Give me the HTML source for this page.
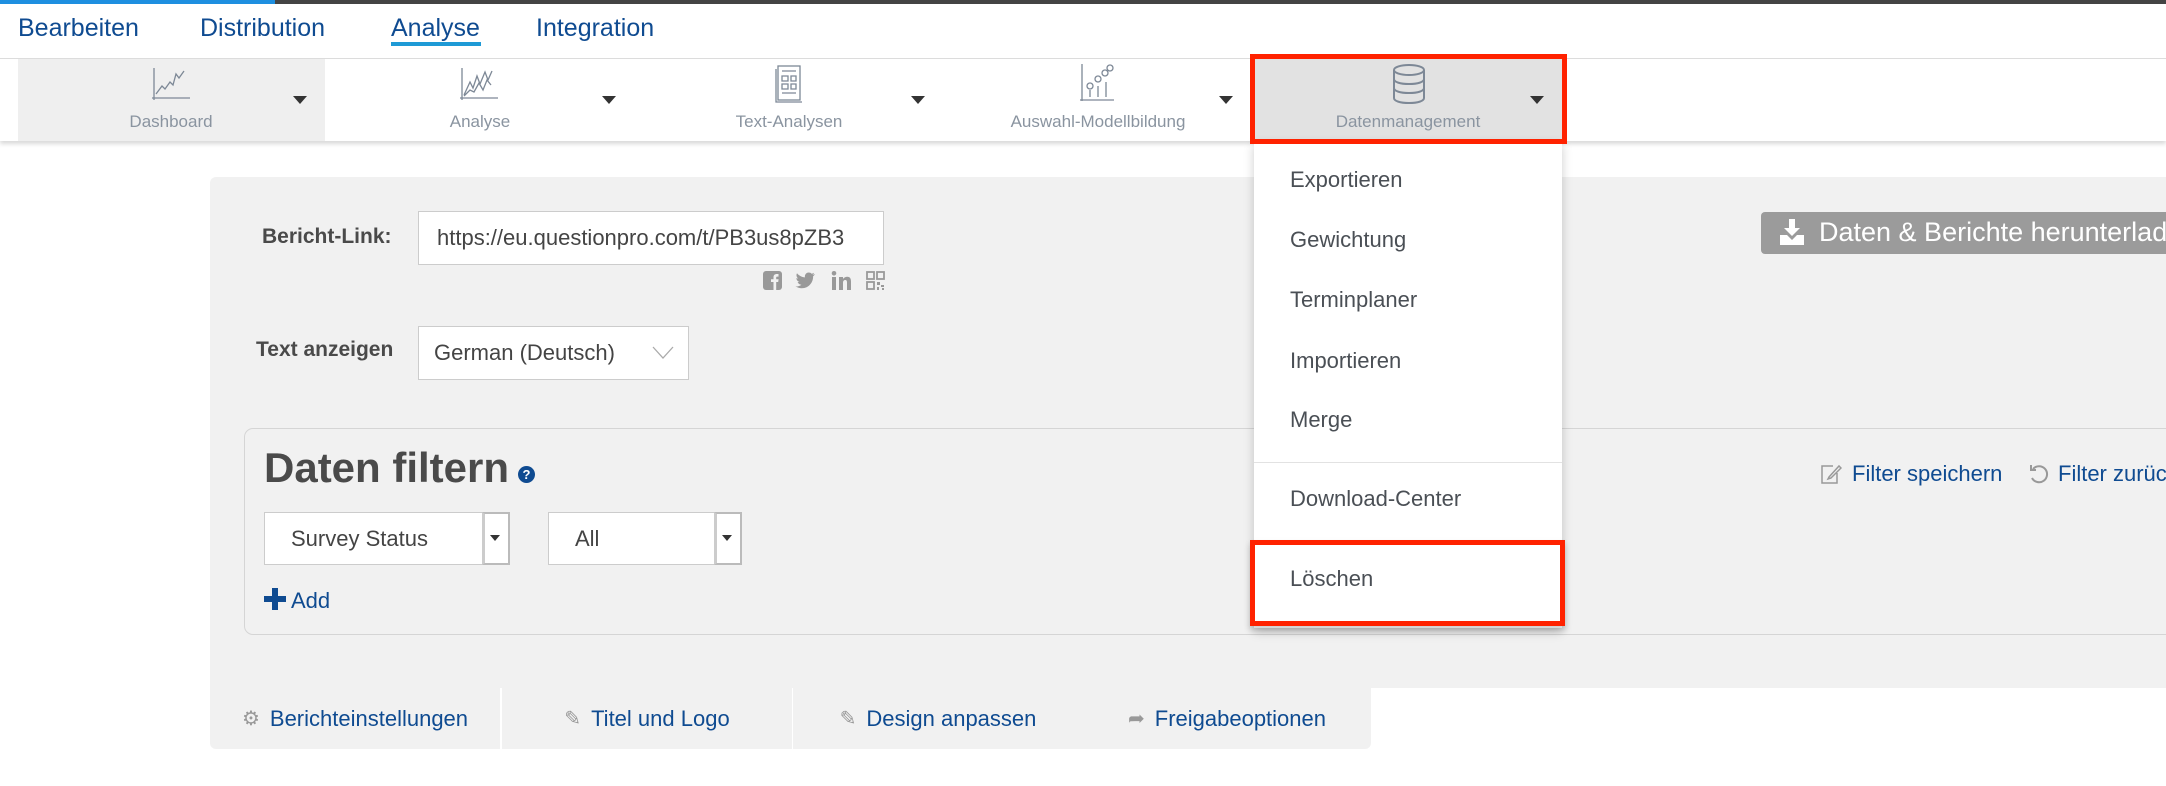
<!DOCTYPE html>
<html><head><meta charset="utf-8"><style>
*{box-sizing:border-box;margin:0;padding:0}
body{width:2166px;height:786px;overflow:hidden;background:#fff;font-family:"Liberation Sans Narrow","Liberation Sans",sans-serif;position:relative;color:#4a4f55}
.a{position:absolute;white-space:nowrap}
.tab{font-size:25px;color:#0f4b91;top:14px}
.tl{font-size:17px;color:#8a94a0;top:112px;transform:translateX(-50%)}
.arr{width:0;height:0;border-left:7px solid transparent;border-right:7px solid transparent;border-top:8px solid #333;top:96px}
.dd{font-size:22px;color:#4a4f55;left:1290px}
.blue{color:#0f4b91}
.red{border:5px solid #ff2200}
.btab{top:688px;height:61px;width:290px;background:#f1f1f1;font-size:22px;color:#0f4b91;display:flex;align-items:center;justify-content:center;gap:10px}
</style></head><body>
<div class="a" style="left:0;top:0;width:2166px;height:4px;background:#444"></div>
<div class="a" style="left:0;top:0;width:275px;height:4px;background:#1e8fe0"></div>
<div class="a tab" style="left:18px">Bearbeiten</div>
<div class="a tab" style="left:200px">Distribution</div>
<div class="a tab" style="left:391px">Analyse</div>
<div class="a" style="left:391px;top:42px;width:90px;height:4px;background:#1e9ad6"></div>
<div class="a tab" style="left:536px">Integration</div>
<div class="a" style="left:0;top:58px;width:2166px;height:1px;background:#ddd"></div>
<div class="a" style="left:0;top:59px;width:2166px;height:82px;background:#fff;box-shadow:0 3px 4px rgba(0,0,0,.15)"></div>
<div class="a" style="left:18px;top:59px;width:307px;height:82px;background:#efefef"></div>
<div class="a" style="left:1254px;top:59px;width:311px;height:82px;background:#e2e2e2"></div>
<svg class="a" style="left:152px;top:68px" width="40" height="34" viewBox="0 0 40 34" fill="none" stroke="#7d8896" stroke-width="1.3"><path d="M2 0V32M0 30H38M4 26L10 18L13 21L18 14L21 17L24 6L27 10L32 3"/></svg>
<svg class="a" style="left:460px;top:68px" width="40" height="34" viewBox="0 0 40 34" fill="none" stroke="#7d8896" stroke-width="1.3"><path d="M2 0V32M0 30H38M4 27L10 14L13 20L17 8L20 16L25 4L28 12L32 3M4 28L10 22L14 24L19 15L23 22L27 12L31 17"/></svg>
<svg class="a" style="left:773px;top:64px" width="34" height="40" viewBox="0 0 34 40" fill="none" stroke="#7d8896" stroke-width="1.3"><rect x="5" y="2" width="22" height="34"/><path d="M3 5V38H29M9 7H23M9 12H15V17H9ZM18 12H23V17H18ZM9 20H15V25H9ZM18 20H23V25H18ZM9 29H23"/></svg>
<svg class="a" style="left:1080px;top:64px" width="36" height="40" viewBox="0 0 36 40" fill="none" stroke="#7d8896" stroke-width="1.3"><path d="M2 0V37M0 36H34M10 33V26M18 33V22M26 33V18"/><circle cx="10" cy="22" r="3"/><circle cx="18" cy="15" r="3"/><circle cx="25" cy="9" r="3"/><circle cx="30" cy="4" r="3"/></svg>
<svg class="a" style="left:1391px;top:63px" width="36" height="42" viewBox="0 0 36 42" fill="none" stroke="#7d8896" stroke-width="2"><ellipse cx="18" cy="7" rx="15" ry="5"/><path d="M3 7V35C3 38 9 40 18 40C27 40 33 38 33 35V7M3 16C3 19 9 21 18 21C27 21 33 19 33 16M3 25C3 28 9 30 18 30C27 30 33 28 33 25"/></svg>
<div class="a tl" style="left:171px">Dashboard</div>
<div class="a tl" style="left:480px">Analyse</div>
<div class="a tl" style="left:789px">Text-Analysen</div>
<div class="a tl" style="left:1098px">Auswahl-Modellbildung</div>
<div class="a tl" style="left:1408px">Datenmanagement</div>
<div class="a arr" style="left:293px"></div>
<div class="a arr" style="left:602px"></div>
<div class="a arr" style="left:911px"></div>
<div class="a arr" style="left:1219px"></div>
<div class="a arr" style="left:1530px"></div>
<div class="a" style="left:210px;top:177px;width:1970px;height:511px;background:#f1f1f1;border-radius:6px 0 0 0"></div>
<div class="a" style="left:262px;top:225px;font-size:21px;font-weight:bold;color:#4a4a4a">Bericht-Link:</div>
<div class="a" style="left:418px;top:211px;width:466px;height:54px;background:#fff;border:1px solid #ccc;font-size:22px;padding:13px 18px;overflow:hidden;color:#444">https://eu.questionpro.com/t/PB3us8pZB3</div>
<svg class="a" style="left:763px;top:271px" width="122" height="19" viewBox="0 0 122 19">
<rect x="0" y="0" width="19" height="19" rx="3" fill="#999"/><path d="M10.5 19V11H8V8.3H10.5V6.3C10.5 4 11.8 3 13.8 3H15.5V5.6H14.2C13.3 5.6 13.2 6 13.2 6.6V8.3H15.6L15.2 11H13.2V19Z" fill="#f1f1f1"/>
<path d="M52 3C51 3.5 50.2 3.7 49.4 3.8C50.2 3.3 50.8 2.6 51.1 1.7C50.3 2.2 49.5 2.5 48.6 2.7C47.1 1.1 44.5 1.1 43 2.6C42 3.6 41.6 5 42 6.4C38.8 6.2 36 4.7 34 2.3C33 4.1 33.5 6.3 35.2 7.5C34.5 7.5 34 7.3 33.4 7C33.4 8.9 34.7 10.5 36.5 10.9C35.9 11.1 35.3 11.1 34.7 11C35.2 12.6 36.7 13.7 38.4 13.7C36.7 15 34.6 15.7 32.5 15.4C34.4 16.6 36.5 17.2 38.7 17.2C46.1 17.2 50.3 11 50.1 5.2C50.9 4.6 51.5 3.9 52 3Z" fill="#999"/>
<rect x="69" y="6" width="4" height="13" fill="#999"/><circle cx="71" cy="2.3" r="2.3" fill="#999"/><path d="M76 6H80V8C81 6.5 82.5 5.7 84.3 5.7C87 5.7 88 7.5 88 10.5V19H84V11.5C84 10 83.6 9 82.2 9C80.8 9 80 10 80 11.6V19H76Z" fill="#999"/>
<g fill="none" stroke="#999" stroke-width="1.8"><rect x="104" y="1" width="7" height="7"/><rect x="114" y="1" width="7" height="7"/><rect x="104" y="11" width="7" height="7"/></g><g fill="#999"><rect x="114" y="11" width="3" height="3"/><rect x="118" y="14" width="3" height="2"/><rect x="114" y="16" width="2" height="3"/><rect x="119" y="17" width="2" height="2"/></g>
</svg>
<div class="a" style="left:256px;top:338px;font-size:21px;font-weight:bold;color:#4a4a4a">Text anzeigen</div>
<div class="a" style="left:418px;top:326px;width:271px;height:54px;background:#fff;border:1px solid #ccc;font-size:22px;padding:13px 15px;color:#444">German (Deutsch)</div>
<svg class="a" style="left:652px;top:346px" width="22" height="14"><path d="M1 1L11 12L21 1" fill="none" stroke="#aaa" stroke-width="1.3"/></svg>
<div class="a" style="left:1761px;top:212px;width:420px;height:42px;background:#9b9b9b;border-radius:4px;color:#fff;font-size:27px;padding:5px 0 0 58px">Daten &amp; Berichte herunterladen</div>
<svg class="a" style="left:1779px;top:219px" width="26" height="26" viewBox="0 0 26 26" fill="#fff"><path d="M10 0H16V9H21L13 17L5 9H10Z"/><path d="M1 16H8L13 21L18 16H25V26H1Z"/></svg>
<div class="a" style="left:244px;top:428px;width:1940px;height:207px;border:1px solid #d5d5d5;border-radius:9px"></div>
<div class="a" style="left:264px;top:444px;font-size:42px;font-weight:bold;color:#4a4a4a">Daten filtern</div>
<div class="a" style="left:518px;top:466px;width:17px;height:17px;border-radius:50%;background:#0f4b91;color:#fff;font-size:13px;font-weight:bold;text-align:center;line-height:17px">?</div>
<div class="a" style="left:264px;top:512px;width:246px;height:53px;background:#fff;border:1px solid #ccc;font-size:22px;padding:13px 26px;color:#444">Survey Status</div>
<div class="a" style="left:482px;top:512px;width:28px;height:53px;background:#fff;border:2px solid #bbb;border-left:3px solid #ccc"></div>
<div class="a arr" style="left:490px;top:535px;border-left-width:5px;border-right-width:5px;border-top-width:6px"></div>
<div class="a" style="left:548px;top:512px;width:194px;height:53px;background:#fff;border:1px solid #ccc;font-size:22px;padding:13px 26px;color:#444">All</div>
<div class="a" style="left:714px;top:512px;width:28px;height:53px;background:#fff;border:2px solid #bbb;border-left:3px solid #ccc"></div>
<div class="a arr" style="left:722px;top:535px;border-left-width:5px;border-right-width:5px;border-top-width:6px"></div>
<svg class="a" style="left:264px;top:588px" width="22" height="22"><path d="M8 0H14V8H22V14H14V22H8V14H0V8H8Z" fill="#0f4b91"/></svg>
<div class="a blue" style="left:291px;top:588px;font-size:22px">Add</div>
<svg class="a" style="left:1820px;top:463px" width="22" height="22" fill="none" stroke="#999" stroke-width="1.5"><path d="M13 3H2V20H17V10M9 14L19 3L21 5L11 15L8 16Z"/></svg>
<div class="a blue" style="left:1852px;top:461px;font-size:22px">Filter speichern</div>
<svg class="a" style="left:2029px;top:463px" width="20" height="22" fill="none" stroke="#999" stroke-width="2"><path d="M4 6A8 8 0 1 1 3 15M2 2V7H7"/></svg>
<div class="a blue" style="left:2058px;top:461px;font-size:22px">Filter zurücksetzen</div>
<div class="a btab" style="left:210px;border-radius:0 0 0 6px"><span style="color:#999;font-size:20px">⚙</span>Berichteinstellungen</div>
<div class="a btab" style="left:502px"><span style="color:#999;font-size:20px">✎</span>Titel und Logo</div>
<div class="a btab" style="left:793px"><span style="color:#999;font-size:20px">✎</span>Design anpassen</div>
<div class="a btab" style="left:1083px;width:288px;border-radius:0 0 6px 0"><span style="color:#999;font-size:20px">➦</span>Freigabeoptionen</div>
<div class="a" style="left:1254px;top:141px;width:308px;height:487px;background:#fff;box-shadow:0 4px 10px rgba(0,0,0,.2)"></div>
<div class="a dd" style="top:167px">Exportieren</div>
<div class="a dd" style="top:227px">Gewichtung</div>
<div class="a dd" style="top:287px">Terminplaner</div>
<div class="a dd" style="top:348px">Importieren</div>
<div class="a dd" style="top:407px">Merge</div>
<div class="a" style="left:1254px;top:462px;width:308px;height:1px;background:#e2e2e2"></div>
<div class="a dd" style="top:486px">Download-Center</div>
<div class="a dd" style="top:566px">Löschen</div>
<div class="a red" style="left:1250px;top:54px;width:317px;height:90px"></div>
<div class="a red" style="left:1250px;top:540px;width:315px;height:86px;box-shadow:0 4px 6px rgba(0,0,0,.2)"></div>
</body></html>
